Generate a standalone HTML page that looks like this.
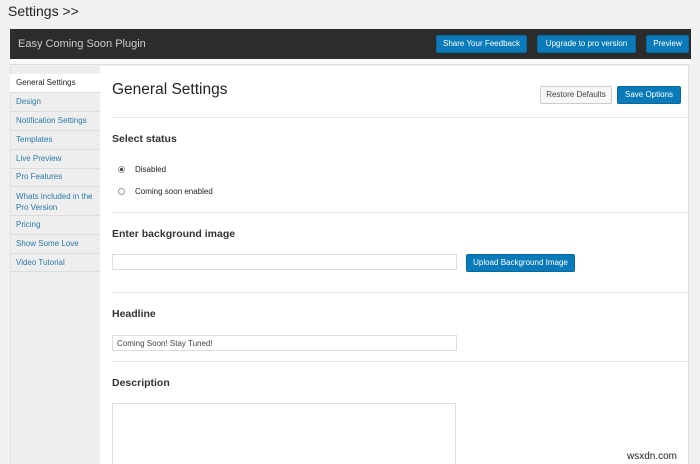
<!DOCTYPE html>
<html><head><style>
*{margin:0;padding:0;box-sizing:border-box}
html,body{width:700px;height:464px;overflow:hidden}
body{background:#f1f1f1;font-family:"Liberation Sans",sans-serif;position:relative;color:#222}
.a{position:absolute}
.btn{position:absolute;background:#0a7ab8;color:#fff;font-size:8px;text-align:center;border-radius:2px;border:1px solid #066a9e}
.nav{position:absolute;left:10px;width:90px;font-size:8px;color:#2a7aa8;padding-left:6px;border-bottom:1px solid #ddd}
.hr{position:absolute;left:112px;width:576px;height:1px;background:#e6e6e6}
.lbl{position:absolute;left:112px;font-size:10.5px;font-weight:bold;color:#333}
.inp{position:absolute;left:112px;width:345px;height:16px;border:1px solid #ddd;background:#fff;font-size:8px;color:#444;padding:3px 4px}
</style></head><body>
<div class="a" style="left:8px;top:3px;font-size:14px;color:#222">Settings &gt;&gt;</div>
<div class="a" style="left:10px;top:29px;width:681px;height:30px;background:#2c2c2c"></div>
<div class="a" style="left:18px;top:38px;font-size:11px;color:#ccc">Easy Coming Soon Plugin</div>
<div class="btn" style="left:436px;top:35px;width:91px;height:18px;line-height:16px">Share Your Feedback</div>
<div class="btn" style="left:537px;top:35px;width:99px;height:18px;line-height:16px">Upgrade to pro version</div>
<div class="btn" style="left:646px;top:35px;width:43px;height:18px;line-height:16px">Preview</div>
<div class="a" style="left:10px;top:59px;width:681px;height:6px;background:#fafafa;border-bottom:1px solid #ddd"></div>
<div class="a" style="left:10px;top:66px;width:90px;height:398px;background:#eeeeee;border-left:1px solid #e0e0e0"></div>
<div class="a" style="left:100px;top:66px;width:589px;height:398px;background:#fff;border-right:1px solid #ddd"></div>
<div class="nav" style="top:74px;height:19px;line-height:18px;background:#fff;color:#222;width:91px">General Settings</div>
<div class="nav" style="top:93px;height:19px;line-height:18px">Design</div>
<div class="nav" style="top:112px;height:19px;line-height:18px">Notification Settings</div>
<div class="nav" style="top:131px;height:19px;line-height:18px">Templates</div>
<div class="nav" style="top:150px;height:19px;line-height:18px">Live Preview</div>
<div class="nav" style="top:168px;height:19px;line-height:18px">Pro Features</div>
<div class="nav" style="top:187px;height:29px;line-height:11px;padding-top:4px">Whats included in the Pro Version</div>
<div class="nav" style="top:216px;height:19px;line-height:18px">Pricing</div>
<div class="nav" style="top:235px;height:19px;line-height:18px">Show Some Love</div>
<div class="nav" style="top:254px;height:18px;line-height:18px">Video Tutorial</div>
<div class="a" style="left:112px;top:81px;font-size:15.5px;color:#222">General Settings</div>
<div class="a" style="left:540px;top:86px;width:72px;height:18px;border:1px solid #ccc;background:#f7f7f7;font-size:8px;color:#444;text-align:center;line-height:16px;border-radius:2px">Restore Defaults</div>
<div class="btn" style="left:617px;top:86px;width:64px;height:18px;line-height:16px">Save Options</div>
<div class="hr" style="top:117px"></div>
<div class="lbl" style="top:133px">Select status</div>
<div class="a" style="left:118px;top:166px;width:7px;height:7px;border:1px solid #999;border-radius:50%"><div style="margin:1px;width:3px;height:3px;border-radius:50%;background:#333"></div></div>
<div class="a" style="left:135px;top:165px;font-size:8px">Disabled</div>
<div class="a" style="left:118px;top:188px;width:7px;height:7px;border:1px solid #999;border-radius:50%"></div>
<div class="a" style="left:135px;top:187px;font-size:8px">Coming soon enabled</div>
<div class="hr" style="top:212px"></div>
<div class="lbl" style="top:228px">Enter background image</div>
<div class="inp" style="top:254px"></div>
<div class="btn" style="left:466px;top:254px;width:109px;height:18px;line-height:16px">Upload Background Image</div>
<div class="hr" style="top:292px"></div>
<div class="lbl" style="top:308px">Headline</div>
<div class="inp" style="top:335px">Coming Soon! Stay Tuned!</div>
<div class="hr" style="top:361px"></div>
<div class="lbl" style="top:377px">Description</div>
<div class="inp" style="top:403px;width:344px;height:61px;border-bottom:none"></div>
<div class="a" style="left:627px;top:451px;font-size:10px;color:#222">wsxdn.com</div>
</body></html>
